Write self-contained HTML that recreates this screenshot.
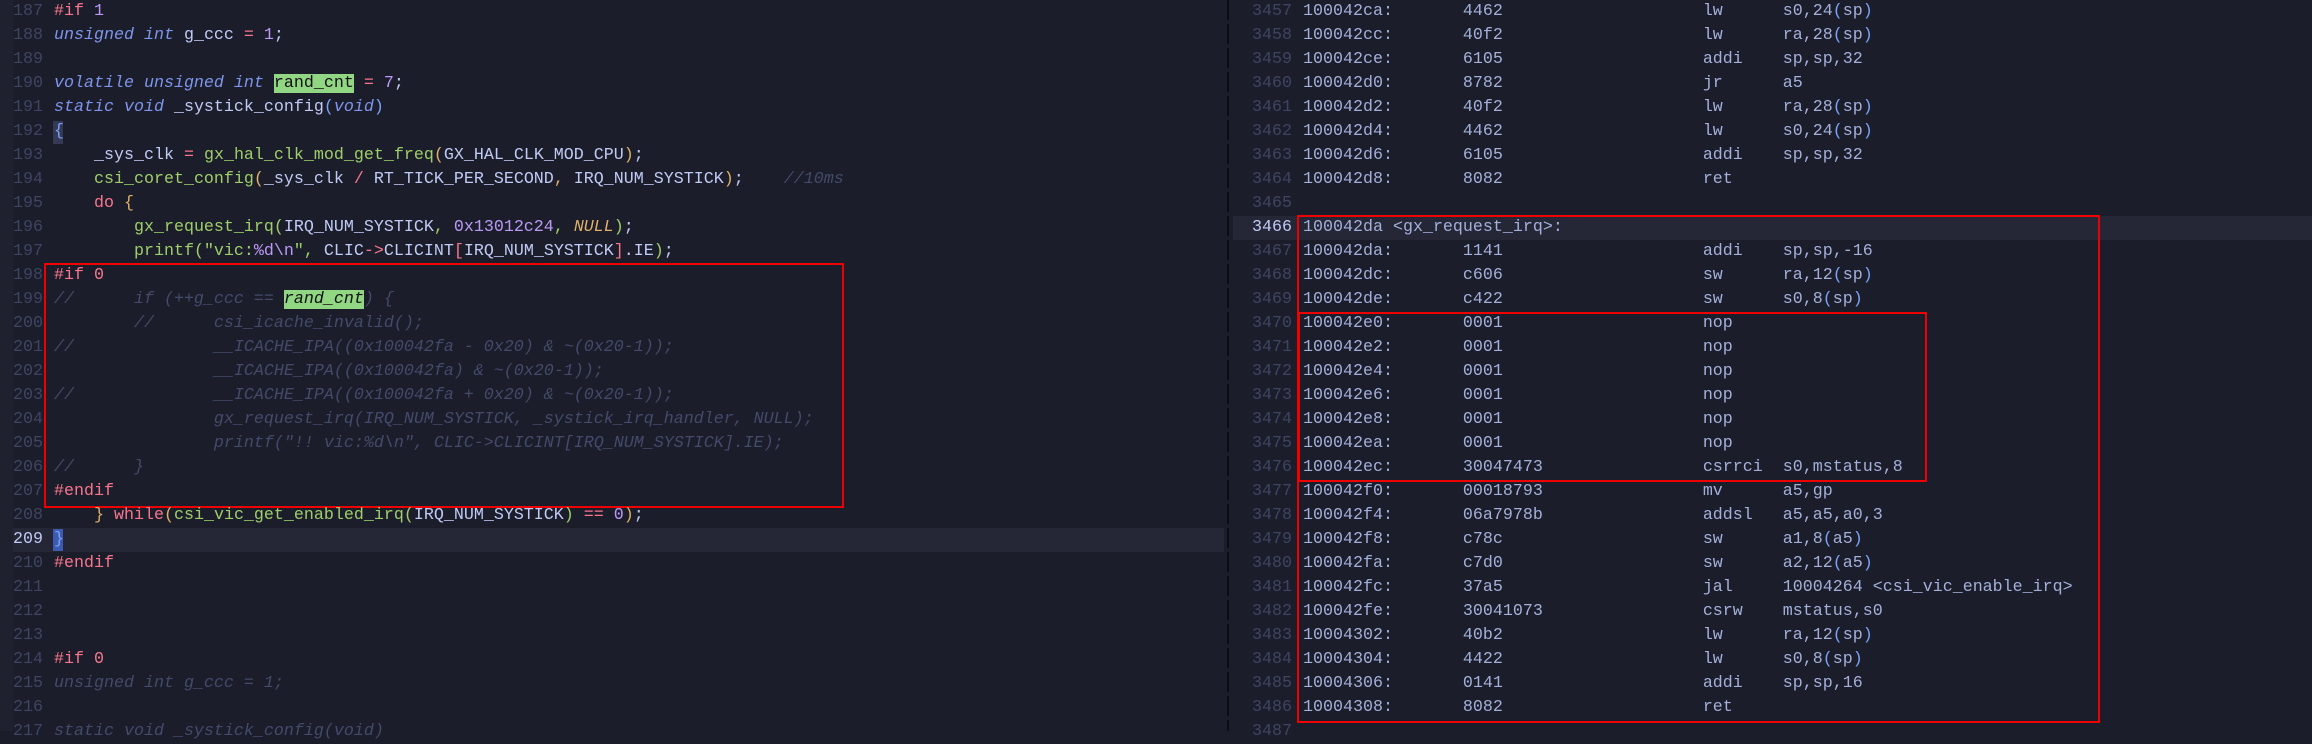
<!DOCTYPE html>
<html><head><meta charset="utf-8"><style>
*{margin:0;padding:0;box-sizing:border-box}
body{width:2312px;height:731px;background:#1c1d2a;overflow:hidden;position:relative;font-family:"Liberation Mono",monospace;font-size:16.67px;color:#c0caf5}
.l{position:absolute;height:24px;line-height:24px;white-space:pre}
.n{position:absolute;height:24px;line-height:24px;text-align:right;color:#3e4563;white-space:pre}
.k{color:#7d95ec;font-style:italic}
.p{color:#f7768e}
.f{color:#9ece6a}
.m{color:#bb9af7}
.o{color:#e0af68}
.b{color:#7aa2f7}
.r{color:#f7768e}
.c{color:#434a6a;font-style:italic}
.hl{background:#90d683;color:#111}
.d{color:#a3b0da}
.band{position:absolute;height:24px;background:#252736}
.box{position:absolute;border:2px solid #ee0000}
</style></head><body>
<div style="position:absolute;left:0;top:0;width:13px;height:731px;background:#20212e"></div>
<div class="band" style="left:13px;top:528px;width:1211px"></div>
<div class="band" style="left:1233px;top:216px;width:1079px"></div>
<div style="position:absolute;left:1227px;top:0;width:2px;height:731px;background:repeating-linear-gradient(#0c0d14 0 20px,transparent 20px 24px)"></div>
<div style="position:absolute;left:53px;top:121px;width:10px;height:23px;background:#343a55"></div>
<div style="position:absolute;left:53px;top:529px;width:10px;height:22px;background:#3d5bb0"></div>

<div class="box" style="left:44px;top:263px;width:800px;height:245px"></div>
<div class="box" style="left:1297px;top:215px;width:803px;height:508px"></div>
<div class="box" style="left:1298px;top:312px;width:629px;height:170px"></div>

<!-- left pane -->
<div class="n" style="left:0;width:43px;top:0">187</div><div class="l" style="left:54px;top:0"><span class="p">#if</span> <span class="m">1</span></div>
<div class="n" style="left:0;width:43px;top:24px">188</div><div class="l" style="left:54px;top:24px"><span class="k">unsigned int</span> g_ccc <span class="p">=</span> <span class="m">1</span>;</div>
<div class="n" style="left:0;width:43px;top:48px">189</div>
<div class="n" style="left:0;width:43px;top:72px">190</div><div class="l" style="left:54px;top:72px"><span class="k">volatile unsigned int</span> <span class="hl">rand_cnt</span> <span class="p">=</span> <span class="m">7</span>;</div>
<div class="n" style="left:0;width:43px;top:96px">191</div><div class="l" style="left:54px;top:96px"><span class="k">static void</span> _systick_config<span class="b">(</span><span class="k">void</span><span class="b">)</span></div>
<div class="n" style="left:0;width:43px;top:120px">192</div><div class="l" style="left:54px;top:120px"><span class="b">{</span></div>
<div class="n" style="left:0;width:43px;top:144px">193</div><div class="l" style="left:54px;top:144px">    _sys_clk <span class="p">=</span> <span class="f">gx_hal_clk_mod_get_freq</span><span class="o">(</span>GX_HAL_CLK_MOD_CPU<span class="o">)</span>;</div>
<div class="n" style="left:0;width:43px;top:168px">194</div><div class="l" style="left:54px;top:168px">    <span class="f">csi_coret_config</span><span class="o">(</span>_sys_clk <span class="p">/</span> RT_TICK_PER_SECOND<span class="o">,</span> IRQ_NUM_SYSTICK<span class="o">)</span>;    <span class="c">//10ms</span></div>
<div class="n" style="left:0;width:43px;top:192px">195</div><div class="l" style="left:54px;top:192px">    <span class="p">do</span> <span class="o">{</span></div>
<div class="n" style="left:0;width:43px;top:216px">196</div><div class="l" style="left:54px;top:216px">        <span class="f">gx_request_irq(</span>IRQ_NUM_SYSTICK<span class="f">,</span> <span class="m">0x13012c24</span><span class="f">,</span> <span class="o" style="font-style:italic">NULL</span><span class="f">)</span>;</div>
<div class="n" style="left:0;width:43px;top:240px">197</div><div class="l" style="left:54px;top:240px">        <span class="f">printf(</span><span class="f">"vic:<span class="m">%d\n</span>"</span><span class="f">,</span> CLIC<span class="p">-&gt;</span>CLICINT<span class="r">[</span>IRQ_NUM_SYSTICK<span class="r">]</span>.IE<span class="f">)</span>;</div>
<div class="n" style="left:0;width:43px;top:264px">198</div><div class="l" style="left:54px;top:264px"><span class="p">#if 0</span></div>
<div class="n" style="left:0;width:43px;top:288px">199</div><div class="l c" style="left:54px;top:288px">//      if (++g_ccc == <span class="hl">rand_cnt</span>) {</div>
<div class="n" style="left:0;width:43px;top:312px">200</div><div class="l c" style="left:54px;top:312px">        //      csi_icache_invalid();</div>
<div class="n" style="left:0;width:43px;top:336px">201</div><div class="l c" style="left:54px;top:336px">//              __ICACHE_IPA((0x100042fa - 0x20) &amp; ~(0x20-1));</div>
<div class="n" style="left:0;width:43px;top:360px">202</div><div class="l c" style="left:54px;top:360px">                __ICACHE_IPA((0x100042fa) &amp; ~(0x20-1));</div>
<div class="n" style="left:0;width:43px;top:384px">203</div><div class="l c" style="left:54px;top:384px">//              __ICACHE_IPA((0x100042fa + 0x20) &amp; ~(0x20-1));</div>
<div class="n" style="left:0;width:43px;top:408px">204</div><div class="l c" style="left:54px;top:408px">                gx_request_irq(IRQ_NUM_SYSTICK, _systick_irq_handler, NULL);</div>
<div class="n" style="left:0;width:43px;top:432px">205</div><div class="l c" style="left:54px;top:432px">                printf("!! vic:%d\n", CLIC-&gt;CLICINT[IRQ_NUM_SYSTICK].IE);</div>
<div class="n" style="left:0;width:43px;top:456px">206</div><div class="l c" style="left:54px;top:456px">//      }</div>
<div class="n" style="left:0;width:43px;top:480px">207</div><div class="l" style="left:54px;top:480px"><span class="p">#endif</span></div>
<div class="n" style="left:0;width:43px;top:504px">208</div><div class="l" style="left:54px;top:504px">    <span class="o">}</span> <span class="p">while</span><span class="o">(</span><span class="f">csi_vic_get_enabled_irq(</span>IRQ_NUM_SYSTICK<span class="f">)</span> <span class="p">==</span> <span class="m">0</span><span class="o">)</span>;</div>
<div class="n" style="left:0;width:43px;top:528px;color:#c0caf5">209</div><div class="l" style="left:54px;top:528px"><span class="b">}</span></div>
<div class="n" style="left:0;width:43px;top:552px">210</div><div class="l" style="left:54px;top:552px"><span class="p">#endif</span></div>
<div class="n" style="left:0;width:43px;top:576px">211</div>
<div class="n" style="left:0;width:43px;top:600px">212</div>
<div class="n" style="left:0;width:43px;top:624px">213</div>
<div class="n" style="left:0;width:43px;top:648px">214</div><div class="l" style="left:54px;top:648px"><span class="p">#if 0</span></div>
<div class="n" style="left:0;width:43px;top:672px">215</div><div class="l c" style="left:54px;top:672px">unsigned int g_ccc = 1;</div>
<div class="n" style="left:0;width:43px;top:696px">216</div>
<div class="n" style="left:0;width:43px;top:720px">217</div><div class="l c" style="left:54px;top:720px">static void _systick_config(void)</div>

<!-- right pane -->
<div class="n" style="left:1240px;width:52px;top:0">3457</div><div class="l d" style="left:1303px;top:0">100042ca:       4462                    lw      s0,24<span class="b">(</span>sp<span class="b">)</span></div>
<div class="n" style="left:1240px;width:52px;top:24px">3458</div><div class="l d" style="left:1303px;top:24px">100042cc:       40f2                    lw      ra,28<span class="b">(</span>sp<span class="b">)</span></div>
<div class="n" style="left:1240px;width:52px;top:48px">3459</div><div class="l d" style="left:1303px;top:48px">100042ce:       6105                    addi    sp,sp,32</div>
<div class="n" style="left:1240px;width:52px;top:72px">3460</div><div class="l d" style="left:1303px;top:72px">100042d0:       8782                    jr      a5</div>
<div class="n" style="left:1240px;width:52px;top:96px">3461</div><div class="l d" style="left:1303px;top:96px">100042d2:       40f2                    lw      ra,28<span class="b">(</span>sp<span class="b">)</span></div>
<div class="n" style="left:1240px;width:52px;top:120px">3462</div><div class="l d" style="left:1303px;top:120px">100042d4:       4462                    lw      s0,24<span class="b">(</span>sp<span class="b">)</span></div>
<div class="n" style="left:1240px;width:52px;top:144px">3463</div><div class="l d" style="left:1303px;top:144px">100042d6:       6105                    addi    sp,sp,32</div>
<div class="n" style="left:1240px;width:52px;top:168px">3464</div><div class="l d" style="left:1303px;top:168px">100042d8:       8082                    ret</div>
<div class="n" style="left:1240px;width:52px;top:192px">3465</div>
<div class="n" style="left:1240px;width:52px;top:216px;color:#c0caf5">3466</div><div class="l d" style="left:1303px;top:216px">100042da &lt;gx_request_irq&gt;:</div>
<div class="n" style="left:1240px;width:52px;top:240px">3467</div><div class="l d" style="left:1303px;top:240px">100042da:       1141                    addi    sp,sp,-16</div>
<div class="n" style="left:1240px;width:52px;top:264px">3468</div><div class="l d" style="left:1303px;top:264px">100042dc:       c606                    sw      ra,12<span class="b">(</span>sp<span class="b">)</span></div>
<div class="n" style="left:1240px;width:52px;top:288px">3469</div><div class="l d" style="left:1303px;top:288px">100042de:       c422                    sw      s0,8<span class="b">(</span>sp<span class="b">)</span></div>
<div class="n" style="left:1240px;width:52px;top:312px">3470</div><div class="l d" style="left:1303px;top:312px">100042e0:       0001                    nop</div>
<div class="n" style="left:1240px;width:52px;top:336px">3471</div><div class="l d" style="left:1303px;top:336px">100042e2:       0001                    nop</div>
<div class="n" style="left:1240px;width:52px;top:360px">3472</div><div class="l d" style="left:1303px;top:360px">100042e4:       0001                    nop</div>
<div class="n" style="left:1240px;width:52px;top:384px">3473</div><div class="l d" style="left:1303px;top:384px">100042e6:       0001                    nop</div>
<div class="n" style="left:1240px;width:52px;top:408px">3474</div><div class="l d" style="left:1303px;top:408px">100042e8:       0001                    nop</div>
<div class="n" style="left:1240px;width:52px;top:432px">3475</div><div class="l d" style="left:1303px;top:432px">100042ea:       0001                    nop</div>
<div class="n" style="left:1240px;width:52px;top:456px">3476</div><div class="l d" style="left:1303px;top:456px">100042ec:       30047473                csrrci  s0,mstatus,8</div>
<div class="n" style="left:1240px;width:52px;top:480px">3477</div><div class="l d" style="left:1303px;top:480px">100042f0:       00018793                mv      a5,gp</div>
<div class="n" style="left:1240px;width:52px;top:504px">3478</div><div class="l d" style="left:1303px;top:504px">100042f4:       06a7978b                addsl   a5,a5,a0,3</div>
<div class="n" style="left:1240px;width:52px;top:528px">3479</div><div class="l d" style="left:1303px;top:528px">100042f8:       c78c                    sw      a1,8<span class="b">(</span>a5<span class="b">)</span></div>
<div class="n" style="left:1240px;width:52px;top:552px">3480</div><div class="l d" style="left:1303px;top:552px">100042fa:       c7d0                    sw      a2,12<span class="b">(</span>a5<span class="b">)</span></div>
<div class="n" style="left:1240px;width:52px;top:576px">3481</div><div class="l d" style="left:1303px;top:576px">100042fc:       37a5                    jal     10004264 &lt;csi_vic_enable_irq&gt;</div>
<div class="n" style="left:1240px;width:52px;top:600px">3482</div><div class="l d" style="left:1303px;top:600px">100042fe:       30041073                csrw    mstatus,s0</div>
<div class="n" style="left:1240px;width:52px;top:624px">3483</div><div class="l d" style="left:1303px;top:624px">10004302:       40b2                    lw      ra,12<span class="b">(</span>sp<span class="b">)</span></div>
<div class="n" style="left:1240px;width:52px;top:648px">3484</div><div class="l d" style="left:1303px;top:648px">10004304:       4422                    lw      s0,8<span class="b">(</span>sp<span class="b">)</span></div>
<div class="n" style="left:1240px;width:52px;top:672px">3485</div><div class="l d" style="left:1303px;top:672px">10004306:       0141                    addi    sp,sp,16</div>
<div class="n" style="left:1240px;width:52px;top:696px">3486</div><div class="l d" style="left:1303px;top:696px">10004308:       8082                    ret</div>
<div class="n" style="left:1240px;width:52px;top:720px">3487</div>
</body></html>
